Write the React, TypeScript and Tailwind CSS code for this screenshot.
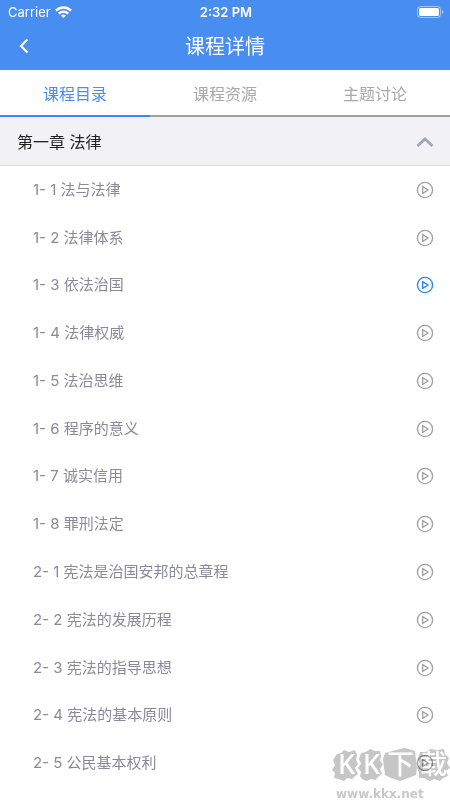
import { useState } from "react";

const TABS = ["课程目录", "课程资源", "主题讨论"];

const LESSONS = [
  { no: "1- 1", title: "法与法律" },
  { no: "1- 2", title: "法律体系" },
  { no: "1- 3", title: "依法治国" },
  { no: "1- 4", title: "法律权威" },
  { no: "1- 5", title: "法治思维" },
  { no: "1- 6", title: "程序的意义" },
  { no: "1- 7", title: "诚实信用" },
  { no: "1- 8", title: "罪刑法定" },
  { no: "2- 1", title: "宪法是治国安邦的总章程" },
  { no: "2- 2", title: "宪法的发展历程" },
  { no: "2- 3", title: "宪法的指导思想" },
  { no: "2- 4", title: "宪法的基本原则" },
  { no: "2- 5", title: "公民基本权利" },
];

function WifiIcon() {
  return (
    <svg width="17" height="12" viewBox="0 0 17 12" fill="none" stroke="#fff" strokeWidth="2.4" aria-hidden="true">
      <path d="M1 4.6a10.6 10.6 0 0 1 15 0" />
      <path d="M3.8 7.6a6.6 6.6 0 0 1 9.4 0" />
      <path d="M8.5 12L6 9.6a3.6 3.6 0 0 1 5 0z" fill="#fff" stroke="none" />
    </svg>
  );
}

function BatteryIcon() {
  return (
    <svg width="27" height="12" viewBox="0 0 27 12" fill="none" aria-hidden="true">
      <rect x="0.5" y="0.5" width="23" height="11" rx="3" stroke="#fff" strokeOpacity="0.5" />
      <rect x="2" y="2" width="20" height="8" rx="1.6" fill="#fff" />
      <path d="M25 4v4c.9-.3 1.5-1.1 1.5-2S25.9 4.3 25 4z" fill="#fff" fillOpacity="0.5" />
    </svg>
  );
}

function PlayIcon() {
  return (
    <svg className="block" width="18" height="18" viewBox="0 0 18 18" fill="none" stroke="currentColor" strokeWidth="1.4" strokeLinejoin="round" aria-hidden="true">
      <circle cx="9" cy="9" r="7.6" />
      <path d="M6.6 5.6v6.8L12.2 9z" />
    </svg>
  );
}

function Watermark() {
  return (
    <div className="pointer-events-none absolute right-0 bottom-0 w-[118px] mix-blend-multiply">
      <svg className="block" width="118" height="46" viewBox="0 -6 118 46">
        <g fill="#c6c6c6">
          <path d="M5 6l4-1 3-3 5 2 6-2 2 5-1 5 2 4-3 4 3 6-4 3-2 2-5-1-3 3-6-2-4-1 1-5-3-3 3-5-2-5z" />
          <path d="M29 5l5-1 4-3 5 2 5 0 1 5-1 5 3 3-3 5 2 5-4 3-3 3-4-1-4 2-5-2-2-3 1-4-3-4 3-4-2-5z" />
          <path d="M53 5l11-3 9-2 10 3 1 9 1 7-1 8-8 3-8 3-9-3-6-3-1-8-1-8z" />
          <path d="M88 4l6 0 4-3 7 1 7-1 1 5 4 4-2 5 3 5-4 3 2 5-5 2-3 3-6-2-4 2-6-3-5 0 0-6-2-4 3-4-2-5z" />
        </g>
        <g fill="#fff" fontFamily="'Noto Sans', 'Noto Sans CJK SC', sans-serif" fontWeight="500">
          <text x="6" y="26" fontSize="27">K</text>
          <text x="31" y="26" fontSize="27">K</text>
          <text x="55" y="26" fontSize="27">下</text>
          <text x="88" y="26" fontSize="27">载</text>
        </g>
      </svg>
      <p className="pl-1 font-['DejaVu_Sans',sans-serif] text-xs leading-3 font-bold text-[#c8c8c8]">www.kkx.net</p>
    </div>
  );
}

export default function App() {
  const [tab, setTab] = useState(0);
  const [playing, setPlaying] = useState(2);
  const [open, setOpen] = useState(true);

  return (
    <div className="relative flex min-h-screen flex-col overflow-hidden bg-white font-[Inter,'Noto_Sans_CJK_SC',sans-serif]">
      <header className="bg-[#488df0] text-white">
        <div className="grid h-6 grid-cols-3 items-center pr-1.5 pl-2 text-[13px] leading-4">
          <div className="flex items-center gap-1">
            <span>Carrier</span>
            <WifiIcon />
          </div>
          <span className="text-center font-semibold">2:32 PM</span>
          <div className="flex justify-end">
            <BatteryIcon />
          </div>
        </div>
        <div className="grid h-[46px] grid-cols-[48px_1fr_48px] items-center">
          <button type="button" aria-label="返回" className="flex h-full items-center justify-center pb-0.5">
            <svg width="10" height="16" viewBox="0 0 10 16" fill="none" stroke="#fff" strokeWidth="2.2" aria-hidden="true">
              <path d="M8.500 1.500L2 8l6.500 6.500" />
            </svg>
          </button>
          <h1 className="text-center text-xl leading-7">课程详情</h1>
        </div>
      </header>

      <nav className="grid grid-cols-3">
        {TABS.map((label, i) => (
          <button
            key={label}
            type="button"
            onClick={() => setTab(i)}
            className={
              i === tab
                ? "h-[47px] border-b-2 border-[#3b86f7] pt-0.5 text-base text-[#488df0]"
                : "h-[47px] border-b-2 border-[#a0a0a0] pt-0.5 text-base text-[#a8a8a8]"
            }
          >
            {label}
          </button>
        ))}
      </nav>

      <button
        type="button"
        aria-expanded={open}
        onClick={() => setOpen(!open)}
        className="flex h-[49px] items-center justify-between border-b border-[#dddde2] bg-[#f2f1f6] pt-0.5 pr-4 pl-[17px] text-base text-[#222222]"
      >
        <span>第一章 法律</span>
        <svg width="18" height="12" viewBox="0 0 18 12" fill="none" stroke="#a3a5b5" strokeWidth="2.8" aria-hidden="true">
          <path d="M1.500 10L9 3l7.500 7" />
        </svg>
      </button>

      {open && (
        <ul className="grid flex-1 auto-rows-fr pb-[13px]">
          {LESSONS.map((lesson, i) => (
            <li key={lesson.no} className="flex items-center justify-between pr-4 pl-[33px] text-[15px] leading-6 text-[#8a8999]">
              <span>
                {lesson.no} {lesson.title}
              </span>
              <button
                type="button"
                aria-label={`播放 ${lesson.title}`}
                onClick={() => setPlaying(i)}
                className={i === playing ? "text-[#2b86fb]" : "text-[#a2a2a2]"}
              >
                <PlayIcon />
              </button>
            </li>
          ))}
        </ul>
      )}

      <Watermark />
    </div>
  );
}
